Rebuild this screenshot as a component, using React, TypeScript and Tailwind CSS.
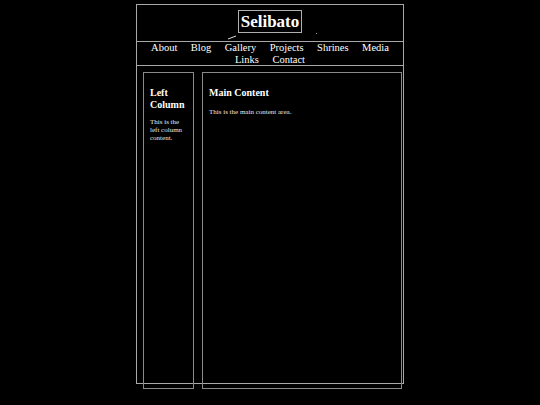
import React from 'react';

const navLinks = ['About', 'Blog', 'Gallery', 'Projects', 'Shrines', 'Media', 'Links', 'Contact'];

const App: React.FC = () => {
  return (
    <div className="min-h-screen w-full bg-black pt-[4px] text-white" style={{ fontFamily: '"Liberation Serif", "Times New Roman", serif' }}>
      <div className="mx-auto h-[380px] w-[268px] border border-[#a8a8a8]">
        {/* header with boxed site title */}
        <header className="relative flex h-[36px] justify-center pt-[5px]">
          <h1 className="h-[23px] border border-[#b0b0b0] px-[2px] text-[17px] font-bold leading-[21px]">
            Selibato
          </h1>
          <svg className="pointer-events-none absolute left-[90px] top-[26px]" width="100" height="10" viewBox="0 0 100 10">
            <path d="M1 8 L9 5" stroke="#ddd" strokeWidth="1" />
            <rect x="89" y="2" width="1" height="1" fill="#999" />
          </svg>
        </header>

        <nav className="flex flex-wrap justify-center gap-x-[13.5px] border-y border-[#a8a8a8] text-[10.5px] leading-[11.5px]">
          {navLinks.map(link => (
            <a key={link} href="#" className="text-white">
              {link}
            </a>
          ))}
        </nav>

        <div className="flex gap-[8px] pl-[6px] pt-[6px]">
          <aside className="h-[317px] w-[51px] shrink-0 border border-[#8a8a8a] px-[6px] pt-[6px]">
            <h2 className="mb-[8px] mt-[8px] text-[10px] font-bold leading-[11.5px]">Left Column</h2>
            <p className="text-[7px] leading-[8px] text-[#e8e8e8]">This is the left column content.</p>
          </aside>
          <main className="h-[317px] w-[200px] shrink-0 border border-[#8a8a8a] px-[6px] pt-[6px]">
            <h2 className="mb-[9px] mt-[8px] text-[10px] font-bold leading-[11.5px]">Main Content</h2>
            <p className="text-[7px] leading-[8px] text-[#e8e8e8]">This is the main content area.</p>
          </main>
        </div>
      </div>
    </div>
  );
};

export default App;
